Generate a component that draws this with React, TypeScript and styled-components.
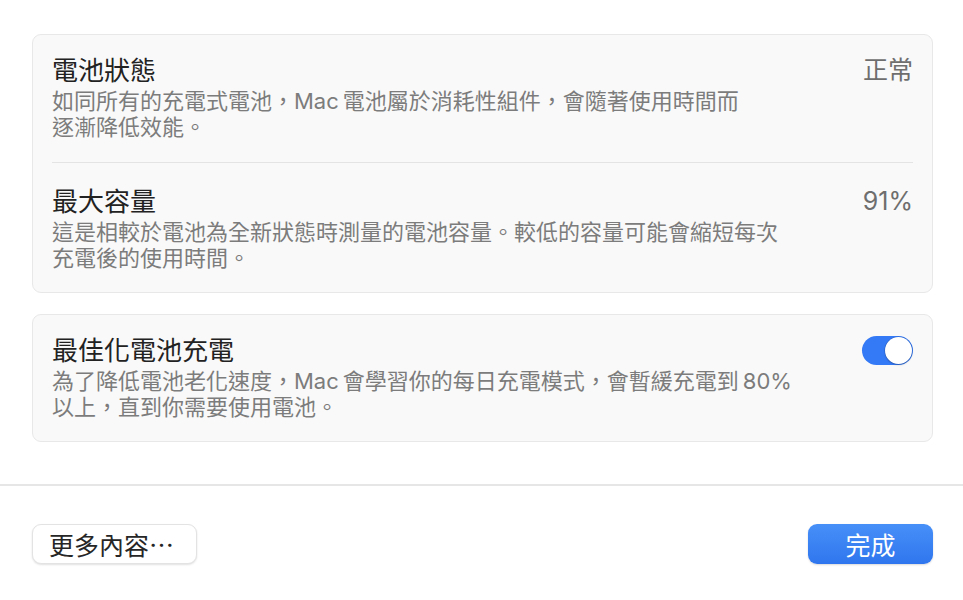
import React from "react";
import styled, { createGlobalStyle } from "styled-components";

const GlobalStyle = createGlobalStyle`
  html, body {
    margin: 0;
    padding: 0;
    background: #ffffff;
  }
  body {
    font-family: "Inter", "Noto Sans CJK TC", "Noto Sans", sans-serif;
    -webkit-font-smoothing: antialiased;
  }
`;

interface SettingRow {
  title: string;
  lines: string[];
  value?: string;
  toggle?: boolean;
}

// thin spaces around latin words, like the macOS auto spacing
const batteryRows: SettingRow[] = [
  {
    title: "電池狀態",
    lines: ["如同所有的充電式電池，Mac\u2009電池屬於消耗性組件，會隨著使用時間而", "逐漸降低效能。"],
    value: "正常",
  },
  {
    title: "最大容量",
    lines: ["這是相較於電池為全新狀態時測量的電池容量。較低的容量可能會縮短每次", "充電後的使用時間。"],
    value: "91%",
  },
];

const chargeRow: SettingRow = {
  title: "最佳化電池充電",
  lines: ["為了降低電池老化速度，Mac\u2009會學習你的每日充電模式，會暫緩充電到\u200980%", "以上，直到你需要使用電池。"],
  toggle: true,
};

const Row: React.FC<{ row: SettingRow }> = ({ row }) => (
  <RowBox>
    <TextCol>
      <Title>{row.title}</Title>
      <Desc>
        {row.lines.map((l) => (
          <DescLine key={l}>{l}</DescLine>
        ))}
      </Desc>
    </TextCol>
    {row.value && <Value>{row.value}</Value>}
    {row.toggle && (
      <Toggle>
        <Knob />
      </Toggle>
    )}
  </RowBox>
);

const App: React.FC = () => {
  return (
    <>
      <GlobalStyle />
      <Page>
        <Content>
          <Card>
            <Row row={batteryRows[0]} />
            <Separator />
            <Row row={batteryRows[1]} />
          </Card>
          <Card>
            <Row row={chargeRow} />
          </Card>
        </Content>
        <Footer>
          <PlainButton>更多內容⋯</PlainButton>
          <PrimaryButton>完成</PrimaryButton>
        </Footer>
      </Page>
    </>
  );
};

export default App;

const Page = styled.div`
  width: 963px;
  height: 600px;
  display: flex;
  flex-direction: column;
  overflow: hidden;
`;

const Content = styled.div`
  display: flex;
  flex-direction: column;
  gap: 21px;
  padding: 34px 30px 42px 32px;
  border-bottom: 2px solid #e6e6e6;
`;

const Card = styled.div`
  background: #f9f9f9;
  border: 1px solid #e8e8e8;
  border-radius: 9px;
  padding: 0 19px;
`;

const RowBox = styled.div`
  display: flex;
  align-items: flex-start;
  justify-content: space-between;
  padding: 19px 0 21px;
`;

const Separator = styled.div`
  height: 1px;
  background: #e4e4e4;
  margin: 1px 0 3px;
`;

const TextCol = styled.div`
  display: flex;
  flex-direction: column;
`;

const Title = styled.div`
  font-size: 26px;
  line-height: 33px;
  color: #222222;
  white-space: nowrap;
`;

const Desc = styled.div`
  margin-top: 1px;
  font-size: 22px;
  line-height: 26px;
  color: #7c7c7c;
`;

const DescLine = styled.span`
  display: block;
  white-space: nowrap;
`;

const Value = styled.div`
  font-size: 25px;
  line-height: 33px;
  color: #6e6e6e;
  white-space: nowrap;
`;

const Toggle = styled.div`
  width: 51px;
  height: 29px;
  border-radius: 15px;
  background: #3479f6;
  display: flex;
  align-items: center;
  justify-content: flex-end;
  padding: 0 1px;
  box-sizing: border-box;
  margin-top: 2px;
`;

const Knob = styled.div`
  width: 27px;
  height: 27px;
  border-radius: 50%;
  background: #ffffff;
  box-shadow: 0 0 0 0.5px rgba(0, 0, 0, 0.15), 0 1px 2px rgba(0, 0, 0, 0.2);
`;

const Footer = styled.div`
  display: flex;
  justify-content: space-between;
  align-items: center;
  padding: 38px 30px 0 32px;
`;

const ButtonBase = styled.div`
  height: 40px;
  box-sizing: border-box;
  border-radius: 9px;
  display: flex;
  align-items: center;
  justify-content: center;
  font-size: 25px;
  white-space: nowrap;
`;

const PlainButton = styled(ButtonBase)`
  width: 165px;
  background: #ffffff;
  color: #262626;
  border: 1px solid #e3e3e3;
  box-shadow: 0 1px 2px rgba(0, 0, 0, 0.12);
  justify-content: flex-start;
  padding-left: 16px;
`;

const PrimaryButton = styled(ButtonBase)`
  width: 125px;
  color: #ffffff;
  background: linear-gradient(180deg, #4790f8 0%, #2f76ee 100%);
  box-shadow: 0 1px 2px rgba(0, 0, 0, 0.15);
`;
